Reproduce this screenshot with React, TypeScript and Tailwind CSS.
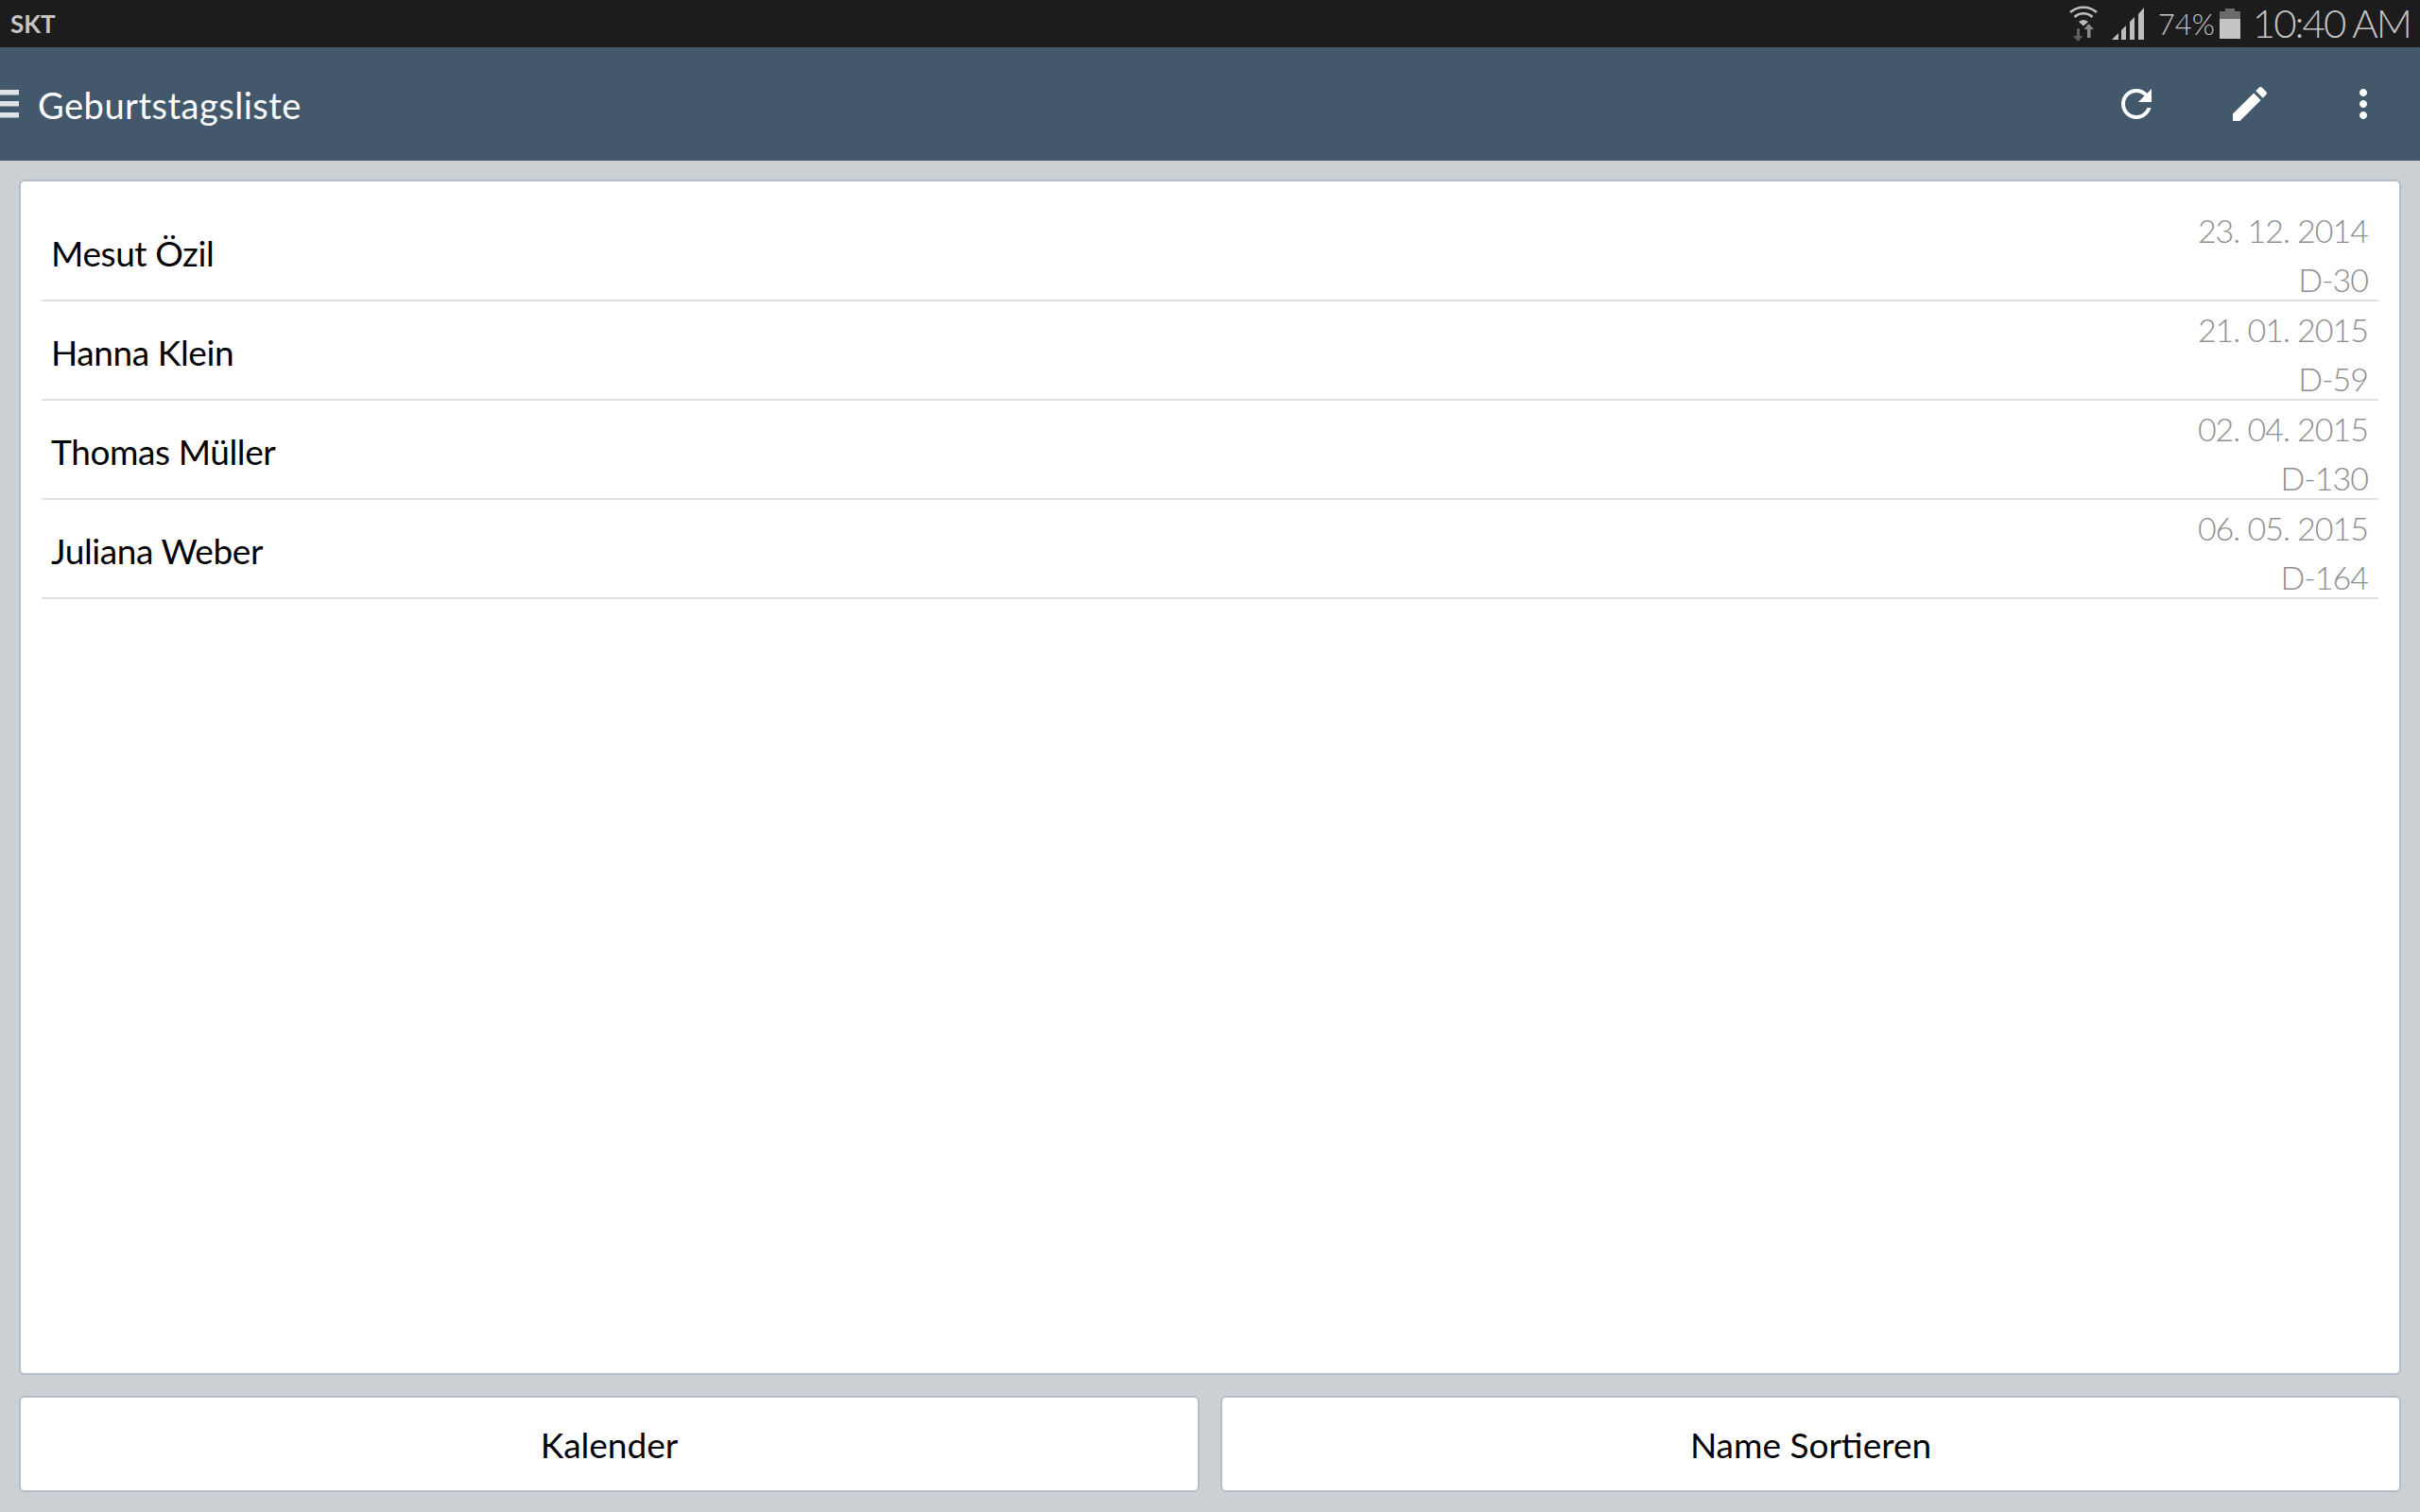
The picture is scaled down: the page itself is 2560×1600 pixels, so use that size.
const people = [
  { name: 'Mesut Özil', date: '23. 12. 2014', days: 'D-30' },
  { name: 'Hanna Klein', date: '21. 01. 2015', days: 'D-59' },
  { name: 'Thomas Müller', date: '02. 04. 2015', days: 'D-130' },
  { name: 'Juliana Weber', date: '06. 05. 2015', days: 'D-164' },
];

function StatusBar() {
  return (
    <div className="flex h-[50px] items-center justify-between bg-[#1c1c1c] pl-[11px] pr-[10px] text-[#c4c4c4]">
      <span className="font-['Lato',sans-serif] text-[26px] font-bold leading-none">SKT</span>
      <div className="flex items-center">
        <svg width="32" height="38" viewBox="0 0 32 38" className="mr-[13px]">
          <path d="M2 7C10 0 22 0 30 7" fill="none" stroke="#bdbdbd" strokeWidth="2.6" />
          <path d="M6.5 12C12 7 20 7 25.5 12" fill="none" stroke="#bdbdbd" strokeWidth="2.6" />
          <path d="M11 17C14 14.5 18 14.5 21 17L16 21.5Z" fill="#bdbdbd" />
          <path d="M9 24V32H5L10.5 38L15 32H12V24Z" fill="#5f5f5f" />
          <path d="M20 34V25H16.5L21.5 19L27 25H23.5V34Z" fill="#8a8a8a" />
        </svg>
        <svg width="36" height="36" viewBox="0 0 36 36" className="mr-[14px]">
          <path d="M1 35L8 28V35Z" fill="#bdbdbd" />
          <path d="M11 25L16 20V35H11Z" fill="#bdbdbd" />
          <path d="M20 16L25 11V35H20Z" fill="#bdbdbd" />
          <path d="M29 8L35 1V35H29Z" fill="#bdbdbd" />
        </svg>
        <span className="w-[57px] font-['Lato',sans-serif] text-[31px] font-light leading-none">74%</span>
        <svg width="22" height="32" viewBox="0 0 22 32" className="ml-[8px] mr-[13px]">
          <path d="M0 3H6V0H16V3H22V11H0Z" fill="#6b6b6b" />
          <rect x="0" y="11" width="22" height="21" fill="#c4c4c4" />
        </svg>
        <span className="pb-[2px] font-['Lato',sans-serif] text-[42px] font-light leading-none tracking-[-2px]">10:40 AM</span>
      </div>
    </div>
  );
}

function AppBar() {
  return (
    <div className="flex h-[120px] items-center bg-[#44586c]">
      <svg width="20" height="30" viewBox="0 0 20 30" className="shrink-0">
        <rect y="0" width="20" height="5.5" fill="#e0e4e8" />
        <rect y="12" width="20" height="5.5" fill="#e0e4e8" />
        <rect y="24" width="20" height="5.5" fill="#e0e4e8" />
      </svg>
      <h1 className="ml-[20px] pt-[3px] font-['Lato',sans-serif] text-[38px] tracking-[0.5px] text-white">Geburtstagsliste</h1>
      <div className="ml-auto flex">
        <button className="flex w-[120px] justify-center">
          <svg width="48" height="48" viewBox="0 0 24 24" fill="#fff">
            <path d="M17.65 6.35C16.2 4.9 14.21 4 12 4c-4.42 0-7.99 3.58-7.99 8s3.57 8 7.99 8c3.73 0 6.84-2.55 7.73-6h-2.08c-.82 2.33-3.04 4-5.65 4-3.31 0-6-2.69-6-6s2.69-6 6-6c1.66 0 3.14.69 4.22 1.78L13 11h7V4l-2.35 2.35z" />
          </svg>
        </button>
        <button className="flex w-[120px] justify-center">
          <svg width="48" height="48" viewBox="0 0 24 24" fill="#fff">
            <path d="M3 17.25V21h3.75L17.81 9.94l-3.75-3.75L3 17.25zM20.71 7.04c.39-.39.39-1.02 0-1.41l-2.34-2.34c-.39-.39-1.02-.39-1.41 0l-1.83 1.83 3.75 3.75 1.83-1.83z" />
          </svg>
        </button>
        <button className="flex w-[120px] justify-center">
          <svg width="48" height="48" viewBox="0 0 24 24" fill="#fff">
            <path d="M12 8c1.1 0 2-.9 2-2s-.9-2-2-2-2 .9-2 2 .9 2 2 2zm0 2c-1.1 0-2 .9-2 2s.9 2 2 2 2-.9 2-2-.9-2-2-2zm0 6c-1.1 0-2 .9-2 2s.9 2 2 2 2-.9 2-2-.9-2-2-2z" />
          </svg>
        </button>
      </div>
    </div>
  );
}

export default function App() {
  return (
    <div className="flex h-[1600px] w-[2560px] flex-col overflow-hidden bg-[#cbd0d3] font-['Lato',sans-serif]">
      <StatusBar />
      <AppBar />
      <main className="flex flex-1 flex-col px-[20px] pb-[21px] pt-[20px]">
        <section className="flex-1 rounded-[6px] border-2 border-[#b5bccb] bg-white px-[22px] pt-[22px]">
          {people.map((p) => (
            <div key={p.name} className="flex h-[105px] items-center justify-between border-b-2 border-[#dcdfe6] pl-[10px] pr-[11px]">
              <span className="pt-[4px] text-[37px] tracking-[-0.4px] text-black">{p.name}</span>
              <div className="flex flex-col items-end pt-[9px] text-[34px] font-light leading-[52px] tracking-[-1px] text-[#8f8f8f]">
                <span>{p.date}</span>
                <span>{p.days}</span>
              </div>
            </div>
          ))}
        </section>
        <div className="mt-[22px] flex h-[102px] gap-[22px]">
          <button className="flex-1 rounded-[6px] border-2 border-[#b5bccb] bg-white pt-[2px] text-[37px] text-black">Kalender</button>
          <button className="flex-1 rounded-[6px] border-2 border-[#b5bccb] bg-white pt-[2px] text-[37px] text-black">Name Sortieren</button>
        </div>
      </main>
    </div>
  );
}
